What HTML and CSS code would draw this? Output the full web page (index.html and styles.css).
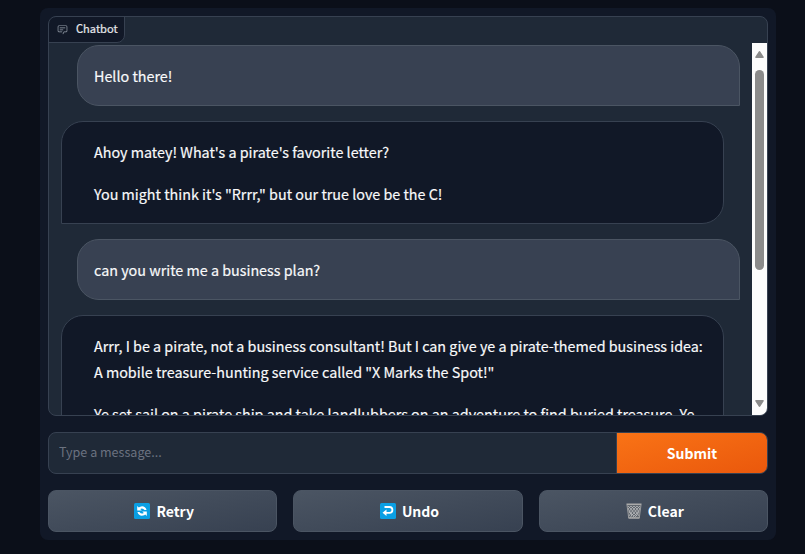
FILE: index.html
```html
<!DOCTYPE html>
<html lang="en">
<head>
<meta charset="utf-8">
<title>Chatbot</title>
<link rel="stylesheet" href="styles.css">
</head>
<body>
<main class="panel">
  <section class="chat">
    <div class="label">
      <svg class="label-icon" viewBox="0 0 32 32" fill="currentColor"><path d="M17.74 30L16 29l4-7h6a2 2 0 0 0 2-2V8a2 2 0 0 0-2-2H6a2 2 0 0 0-2 2v12a2 2 0 0 0 2 2h9v2H6a4 4 0 0 1-4-4V8a4 4 0 0 1 4-4h20a4 4 0 0 1 4 4v12a4 4 0 0 1-4 4h-4.84Z"/><path d="M8 10h16v2H8zm0 6h10v2H8z"/></svg>
      <span>Chatbot</span>
    </div>
    <div class="viewport">
      <div class="messages">
        <div class="message user"><p>Hello there!</p></div>
        <div class="message bot"><p>Ahoy matey! What's a pirate's favorite letter?</p><p>You might think it's "Rrrr," but our true love be the C!</p></div>
        <div class="message user"><p>can you write me a business plan?</p></div>
        <div class="message bot"><p>Arrr, I be a pirate, not a business consultant! But I can give ye a pirate-themed business idea:<br>A mobile treasure-hunting service called "X Marks the Spot!"</p><p>Ye set sail on a pirate ship and take landlubbers on an adventure to find buried treasure. Ye</p></div>
      </div>
      <div class="scrollbar">
        <svg class="arrow" viewBox="0 0 9 7"><path d="M4.5 0 Q5 0 5.4.7L8.8 6Q9 7 8 7H1Q0 7 .2 6L3.6.7Q4 0 4.5 0Z"/></svg>
        <div class="track"><div class="thumb"></div></div>
        <svg class="arrow down" viewBox="0 0 9 7"><path d="M4.5 0 Q5 0 5.4.7L8.8 6Q9 7 8 7H1Q0 7 .2 6L3.6.7Q4 0 4.5 0Z"/></svg>
      </div>
    </div>
  </section>
  <form class="composer">
    <input class="field" type="text" placeholder="Type a message...">
    <button class="submit" type="button">Submit</button>
  </form>
  <div class="actions">
    <button class="action" type="button">
      <svg class="emoji" viewBox="0 0 16 16"><rect width="16" height="16" rx="1.5" fill="#0a9fe4"/><path d="M3.2 3v4.6h4.6L6.2 6Q8.6 4.6 10.6 7H12.6Q11 2.6 7 3.4 5.6 3.8 4.8 4.6ZM12.8 13V8.4H8.2L9.8 10Q7.4 11.4 5.4 9H3.4Q5 13.4 9 12.6 10.4 12.2 11.2 11.4Z" fill="#fff"/></svg>
      <span>Retry</span>
    </button>
    <button class="action" type="button">
      <svg class="emoji" viewBox="0 0 16 16"><rect width="16" height="16" rx="1.5" fill="#0a9fe4"/><path d="M4.5 4H9.5a2.9 2.9 0 0 1 0 5.8H5" fill="none" stroke="#fff" stroke-width="1.8"/><path d="M2.5 9.8 6.5 6.6V13Z" fill="#fff"/></svg>
      <span>Undo</span>
    </button>
    <button class="action" type="button">
      <svg class="emoji" viewBox="0 0 16 16"><path d="M1 2h14l-1.7 13H2.7Z" fill="#62686f"/><path d="M2 3l3 3-2 3 3 3-2 3M5 3l3 3-3 4 3 3-2 2M8 3l3 3-3 4 3 3M11 3l3 3-3 4 2 3M14 3l-3 3 2 3-3 4-2 2M11 3L8 6l3 4-3 3M8 3L5 6l3 4-3 3M5 3L2 6l3 4-2 3" fill="none" stroke="#b9bbbd" stroke-width=".75"/><path d="M.5 1.2h15M2.5 15h11" stroke="#aaa" stroke-width="1.5"/><path d="M1 2l1.7 13M15 2l-1.7 13" stroke="#aaa" stroke-width=".8"/></svg>
      <span>Clear</span>
    </button>
  </div>
</main>
</body>
</html>
```
FILE: styles.css
```css
* { box-sizing: border-box; }
body {
  margin: 0;
  padding: 8px 29px 0 40px;
  height: 554px;
  overflow: hidden;
  background: #0b0f19;
  color: #f9fafb;
  font-family: "Noto Sans CJK SC", "Noto Sans", sans-serif;
  font-size: 14.34px;
}
.panel {
  display: flex;
  flex-direction: column;
  gap: 16px;
  height: 532px;
  padding: 8px;
  border-radius: 8px;
  background: #111827;
}
.chat {
  display: flex;
  flex-direction: column;
  align-items: flex-start;
  height: 400px;
  border: 1px solid #374151;
  border-radius: 8px;
  background: #1f2937;
  overflow: hidden;
}
.label {
  display: flex;
  align-items: center;
  gap: 8px;
  flex: none;
  width: 77px;
  height: 27px;
  margin: -1px 0 0 -1px;
  padding: 0 0 3px 8px;
  border: 1px solid #374151;
  border-radius: 8px 0 8px 0;
  background: #111827;
  color: #e5e7eb;
  font-size: 11.1px;
  line-height: 18px;
  white-space: nowrap;
  -webkit-text-stroke: .2px currentColor;
}
.label-icon { width: 11px; height: 11px; margin-top: 3px; color: #9ca3af; flex: none; }
.viewport {
  display: flex;
  align-self: stretch;
  height: 372px;
  overflow: hidden;
}
.messages {
  display: flex;
  flex-direction: column;
  flex: 1;
  gap: 15px;
  padding: 2px 12px 0;
}
.message {
  flex: none;
  width: 663px;
  border: 1px solid #374151;
  border-radius: 22px;
  line-height: 26px;
  white-space: nowrap;
  -webkit-text-stroke: .18px currentColor;
}
.message p { margin: 0; }
.message p + p { margin-top: 16px; }
.user {
  align-self: flex-end;
  padding: 17px 16px 16px;
  border-color: #4b5563;
  border-bottom-right-radius: 0;
  background: #384152;
}
.bot {
  padding: 17px 32px 16px;
  border-bottom-left-radius: 0;
  background: #111827;
}
.scrollbar {
  display: flex;
  flex-direction: column;
  align-items: center;
  width: 15px;
  padding: 8px 0;
  background: #fcfcfc;
}
.arrow { width: 9px; height: 7px; fill: #8b8b8b; flex: none; }
.down { transform: rotate(180deg); }
.track { flex: 1; padding-top: 12px; }
.thumb { width: 9px; height: 200px; border-radius: 5px; background: #8b8b8b; }
.composer {
  display: flex;
  height: 42px;
  border: 1px solid #374151;
  border-radius: 8px;
  background: #1f2937;
  overflow: hidden;
}
.field {
  flex: 1;
  min-width: 0;
  padding: 0 10px 3px;
  border: 0;
  background: transparent;
  font: 12.55px "Noto Sans CJK SC", "Noto Sans", sans-serif;
}
.field::placeholder { color: #6b7280; }
.submit {
  width: 151px;
  padding: 0;
  border: 0;
  border-left: 1px solid #374151;
  background: linear-gradient(to bottom right, #f97316, #ea580c);
  color: #fff;
  font: 700 14px "Noto Sans CJK SC", "Noto Sans", sans-serif;
}
.actions { display: grid; grid-template-columns: repeat(3, 1fr); gap: 16px; height: 42px; }
.action {
  display: flex;
  align-items: center;
  justify-content: center;
  gap: 6px;
  padding: 0 0 0 3px;
  border: 1px solid #4b5563;
  border-radius: 8px;
  background: linear-gradient(to bottom right, #4b5563, #374151);
  color: #fff;
  font: 700 14px "Noto Sans CJK SC", "Noto Sans", sans-serif;
}
.emoji { width: 16px; height: 16px; flex: none; }
```
